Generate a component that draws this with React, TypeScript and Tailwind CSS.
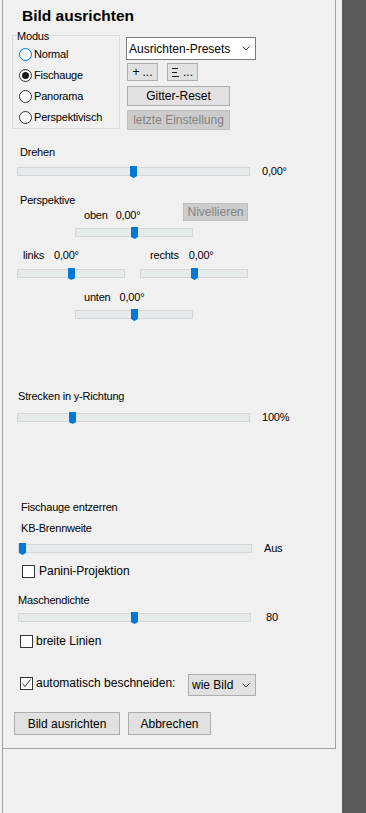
import clsx from "clsx";

// Windows-style "Bild ausrichten" tool panel

const ui = "font-['Liberation_Sans',sans-serif] text-[11px] leading-[13px] tracking-[-0.2px] text-black";
const ar = "font-['Liberation_Sans',sans-serif] text-[12px] leading-[14px] text-black";
const btn =
  "flex items-center justify-center border border-[#adadad] bg-[#e1e1e1] font-['Liberation_Sans',sans-serif] text-[12px] leading-[14px] text-black";
const btnOff =
  "flex items-center justify-center border border-[#bfbfbf] bg-[#cccccc] font-['Liberation_Sans',sans-serif] text-[12px] leading-[14px] text-[#838383]";

interface SliderProps {
  className?: string;
  pos: number;
}
const Slider = ({ className, pos }: SliderProps) => (
  <div className={clsx("relative h-[9px] shrink-0 border border-[#d6d6d6] bg-[#e7eaea]", className)}>
    <svg className="absolute top-[-2px]" style={{ left: pos }} width="7" height="12" viewBox="0 0 7 12">
      <path d="M0 0H7V10L3.5 12L0 10Z" fill="#0078d7" />
    </svg>
  </div>
);

const Radio = ({ label, checked, focus }: { label: string; checked?: boolean; focus?: boolean }) => (
  <div className="flex h-[21px] items-center pl-[6px]">
    <span
      className={clsx(
        "flex h-[13px] w-[13px] items-center justify-center rounded-full border bg-white",
        focus ? "border-[#0078d7]" : "border-[#333333]",
      )}
    >
      {checked && <span className="h-[7px] w-[7px] rounded-full bg-[#1a1a1a]" />}
    </span>
    <span className={clsx(ui, "ml-[2px]")}>{label}</span>
  </div>
);

const Check = ({ checked, className }: { checked?: boolean; className?: string }) => (
  <span className={clsx("flex h-[13px] w-[13px] shrink-0 items-center justify-center border border-[#333333] bg-white", className)}>
    {checked && (
      <svg width="11" height="11" viewBox="0 0 11 11">
        <polyline points="1.5,5.5 4,8.5 9.5,1.5" fill="none" stroke="#333333" strokeWidth="1" />
      </svg>
    )}
  </span>
);

const Chevron = () => (
  <svg width="8" height="5" viewBox="0 0 8 5">
    <polyline points="0.5,0.5 4,4 7.5,0.5" fill="none" stroke="#333333" strokeWidth="1" />
  </svg>
);

const Value = ({ a, b, gap }: { a: string; b: string; gap: string }) => (
  <div className={clsx("flex", gap, ui)}>
    <span>{a}</span>
    <span>{b}</span>
  </div>
);

export default function App() {
  return (
    <div className="flex h-[813px] w-[366px] overflow-hidden bg-[#f0f0f0]">
      <div className="w-[2px] shrink-0" />
      <div className="w-[340px] shrink-0 border-l border-[#a0a0a0]">
        <div className="flex h-[749px] w-[333px] flex-col border-b border-r border-[#a0a0a0]">
          <h1 className="ml-[19px] mt-[7px] font-['Liberation_Sans',sans-serif] text-[15.5px] font-bold leading-[18px] text-black">
            Bild ausrichten
          </h1>

          <div className="mt-[10px] flex items-start">
            <div className="relative ml-[9px] h-[94px] w-[108px] border border-[#dcdcdc]">
              <span className={clsx("absolute left-[4px] top-[-6px] bg-[#f0f0f0]", ui)}>Modus</span>
              <div className="mt-[8px] flex flex-col">
                <Radio label="Normal" focus />
                <Radio label="Fischauge" checked />
                <Radio label="Panorama" />
                <Radio label="Perspektivisch" />
              </div>
            </div>

            <div className="ml-[6px] mt-[2px] flex w-[130px] flex-col items-start">
              <div className="flex h-[23px] w-[130px] items-center justify-between border border-[#7a7a7a] bg-white pl-[2px] pr-[5px]">
                <span className={ar}>Ausrichten-Presets</span>
                <Chevron />
              </div>
              <div className="ml-[1px] mt-[3px] flex gap-[9px]">
                <button className={clsx(btn, "h-[18px] w-[31px] gap-[3px] text-[11px]")}>
                  <span>+</span>
                  <span>...</span>
                </button>
                <button className={clsx(btn, "h-[18px] w-[31px] gap-[4px] text-[11px]")}>
                  <svg width="7" height="9" viewBox="0 0 7 9">
                    <path d="M0 0.5H6M0 4.5H5M0 8.5H7" stroke="#1a1a1a" strokeWidth="1" />
                  </svg>
                  <span>...</span>
                </button>
              </div>
              <button className={clsx(btn, "ml-[1px] mt-[5px] h-[20px] w-[103px]")}>Gitter-Reset</button>
              <button className={clsx(btnOff, "ml-[1px] mt-[4px] h-[20px] w-[103px]")}>letzte Einstellung</button>
            </div>
          </div>

          <div className={clsx("ml-[17px] mt-[16px]", ui)}>Drehen</div>
          <div className="ml-[14px] mt-[6px] flex items-center">
            <Slider className="w-[233px]" pos={112} />
            <span className={clsx("ml-[12px]", ui)}>0,00°</span>
          </div>

          <div className="mt-[16px] flex items-start">
            <div className="flex w-[180px] flex-col">
              <div className={clsx("ml-[17px]", ui)}>Perspektive</div>
              <div className="ml-[81px] mt-[2px]">
                <Value a="oben" b="0,00°" gap="gap-[8px]" />
              </div>
            </div>
            <button className={clsx(btnOff, "mt-[9px] h-[18px] w-[65px]")}>Nivellieren</button>
          </div>
          <Slider className="ml-[72px] mt-[6px] w-[118px]" pos={55} />

          <div className="ml-[14px] mt-[12px] flex">
            <div className="flex w-[108px] flex-col">
              <div className="ml-[6px]">
                <Value a="links" b="0,00°" gap="gap-[10px]" />
              </div>
              <Slider className="mt-[7px] w-[108px]" pos={50} />
            </div>
            <div className="ml-[15px] flex w-[108px] flex-col">
              <div className="ml-[10px]">
                <Value a="rechts" b="0,00°" gap="gap-[10px]" />
              </div>
              <Slider className="mt-[7px] w-[108px]" pos={50} />
            </div>
          </div>

          <div className="ml-[81px] mt-[13px]">
            <Value a="unten" b="0,00°" gap="gap-[9px]" />
          </div>
          <Slider className="ml-[72px] mt-[6px] w-[118px]" pos={55} />

          <div className={clsx("ml-[15px] mt-[71px]", ui)}>Strecken in y-Richtung</div>
          <div className="ml-[14px] mt-[8px] flex items-center">
            <Slider className="w-[233px]" pos={51} />
            <span className={clsx("ml-[12px]", ui)}>100%</span>
          </div>

          <div className={clsx("ml-[18px] mt-[77px]", ui)}>Fischauge entzerren</div>
          <div className={clsx("ml-[18px] mt-[8px]", ui)}>KB-Brennweite</div>
          <div className="ml-[15px] mt-[7px] flex items-center">
            <Slider className="w-[234px]" pos={0} />
            <span className={clsx("ml-[12px]", ui)}>Aus</span>
          </div>

          <div className="ml-[19px] mt-[9px] flex h-[14px] items-center">
            <Check />
            <span className={clsx("ml-[4px]", ar)}>Panini-Projektion</span>
          </div>

          <div className={clsx("ml-[15px] mt-[16px]", ui)}>Maschendichte</div>
          <div className="ml-[15px] mt-[4px] flex items-center">
            <Slider className="w-[233px]" pos={112} />
            <span className={clsx("ml-[15px]", ui)}>80</span>
          </div>

          <div className="ml-[17px] mt-[10px] flex h-[14px] items-center">
            <Check />
            <span className={clsx("ml-[3px]", ar)}>breite Linien</span>
          </div>

          <div className="ml-[17px] mt-[26px] flex items-start">
            <Check checked className="mt-[3px]" />
            <span className={clsx("ml-[3px] mt-[2px] w-[152px]", ar)}>automatisch beschneiden:</span>
            <div className="flex h-[22px] w-[68px] items-center justify-between border border-[#adadad] bg-[#e1e1e1] pl-[3px] pr-[5px]">
              <span className={ar}>wie Bild</span>
              <Chevron />
            </div>
          </div>

          <div className="ml-[11px] mt-[16px] flex gap-[8px]">
            <button className={clsx(btn, "h-[23px] w-[106px]")}>Bild ausrichten</button>
            <button className={clsx(btn, "h-[23px] w-[83px]")}>Abbrechen</button>
          </div>
        </div>
      </div>
      <div className="flex-1 bg-[#5a5a5a]" />
    </div>
  );
}
